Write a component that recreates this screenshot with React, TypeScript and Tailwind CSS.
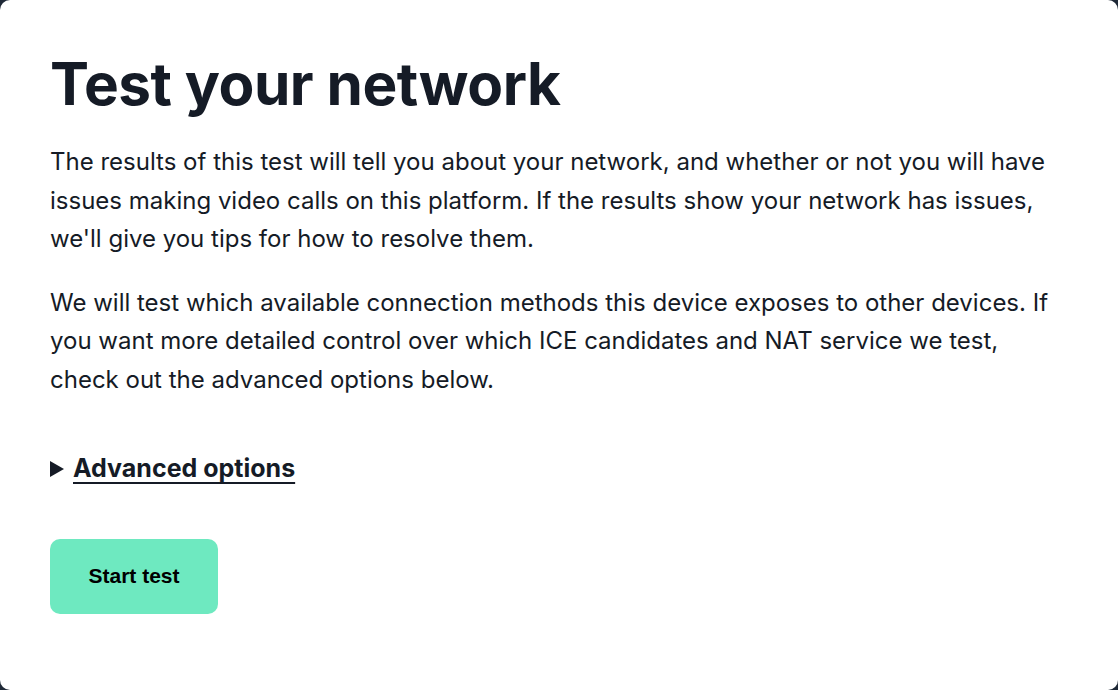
export default function App() {
  return (
    <div className="min-h-screen bg-[#1f2937]">
      <div className="h-[690px] rounded-[10px] bg-white px-[50px] pt-[54px] text-[#151b26] [font-family:Inter,'Noto_Sans',sans-serif]">
        <h1 className="text-[58.5px] font-bold leading-[60px] tracking-[-0.5px]">
          Test your network
        </h1>
        <p className="mt-[29px] text-[24px] leading-[38.5px]">
          The results of this test will tell you about your network, and whether or not you will have issues making
          video calls on this platform. If the results show your network has issues, we'll give you tips for how to
          resolve them.
        </p>
        <p className="mt-[25px] text-[24px] leading-[38.5px]">
          We will test which available connection methods this device exposes to other devices. If you want more
          detailed control over which ICE candidates and NAT service we test, check out the advanced options below.
        </p>
        <details className="mt-[51px]">
          <summary className="flex cursor-pointer list-none items-center gap-[9px] text-[25px] font-bold">
            <svg viewBox="0 0 14 16" className="h-[16px] w-[14px]" fill="currentColor">
              <path d="M0 0L14 8L0 16Z" />
            </svg>
            <span className="underline decoration-2 underline-offset-[5px]">Advanced options</span>
          </summary>
        </details>
        <button className="mt-[51px] h-[75px] w-[168px] rounded-[10px] bg-[#6ee9c0] text-[21px] font-bold text-black [font-family:'Liberation_Sans',Arial,sans-serif]">
          Start test
        </button>
      </div>
    </div>
  );
}
